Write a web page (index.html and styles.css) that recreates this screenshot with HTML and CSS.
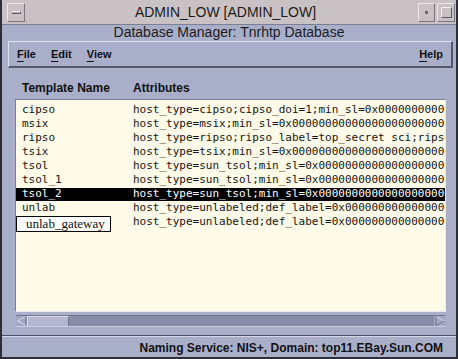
FILE: index.html
```html
<!DOCTYPE html>
<html>
<head>
<meta charset="utf-8">
<link rel="stylesheet" href="styles.css">
</head>
<body>
<div class="window">
  <div class="titlebar">
    <div class="tbtn menu-btn"><span class="dash"></span></div>
    <div class="title">ADMIN_LOW [ADMIN_LOW]</div>
    <div class="tbtn min-btn"><span class="dot"></span></div>
    <div class="tbtn max-btn"><span class="sq"></span></div>
  </div>
  <div class="subtitle">Database Manager: Tnrhtp Database</div>
  <div class="menubar">
    <span class="mi"><u>F</u>ile</span>
    <span class="mi"><u>E</u>dit</span>
    <span class="mi"><u>V</u>iew</span>
    <span class="spacer"></span>
    <span class="mi"><u>H</u>elp</span>
  </div>
  <div class="headers">
    <span class="h-name">Template Name</span>
    <span class="h-attr">Attributes</span>
  </div>
  <div class="list">
    <div class="row"><span class="name">cipso</span><span class="attr">host_type=cipso;cipso_doi=1;min_sl=0x000000000000000000000000000000</span></div>
    <div class="row"><span class="name">msix</span><span class="attr">host_type=msix;min_sl=0x0000000000000000000000000000000000</span></div>
    <div class="row"><span class="name">ripso</span><span class="attr">host_type=ripso;ripso_label=top_secret sci;ripso_error=none</span></div>
    <div class="row"><span class="name">tsix</span><span class="attr">host_type=tsix;min_sl=0x0000000000000000000000000000000000</span></div>
    <div class="row"><span class="name">tsol</span><span class="attr">host_type=sun_tsol;min_sl=0x00000000000000000000000000000000</span></div>
    <div class="row"><span class="name">tsol_1</span><span class="attr">host_type=sun_tsol;min_sl=0x00000000000000000000000000000000</span></div>
    <div class="row selected"><span class="name">tsol_2</span><span class="attr">host_type=sun_tsol;min_sl=0x00000000000000000000000000000000</span></div>
    <div class="row"><span class="name">unlab</span><span class="attr">host_type=unlabeled;def_label=0x00000000000000000000000000000</span></div>
    <div class="row"><span class="name editing"><span class="edit">unlab_gateway</span></span><span class="attr">host_type=unlabeled;def_label=0x00000000000000000000000000000</span></div>
  </div>
  <div class="hscroll">
    <div class="arrow left"><svg width="10" height="10" viewBox="0 0 10 10"><path d="M9 0.5 L0.5 5 L9 9.5" fill="none" stroke="#d6d9e8" stroke-width="1"/><path d="M9 0.5 L9 9.5" stroke="#6e7288" stroke-width="1"/></svg></div>
    <div class="thumb"></div>
    <div class="trough"></div>
    <div class="arrow right"><svg width="10" height="10" viewBox="0 0 10 10"><path d="M1 0.5 L9.5 5" fill="none" stroke="#d6d9e8" stroke-width="1"/><path d="M1 0.5 L1 9.5 L9.5 5" fill="none" stroke="#6e7288" stroke-width="1"/></svg></div>
  </div>
  <div class="status">Naming Service: NIS+, Domain: top11.EBay.Sun.COM</div>
</div>
</body>
</html>
```

FILE: styles.css
```css
html, body {
  margin: 0;
  padding: 0;
  background: #a9aec9;
}
.window {
  width: 458px;
  height: 359px;
  box-sizing: border-box;
  border-left: 2px solid #2e2e38;
  border-right: 2px solid #2e2e38;
  border-bottom: 2px solid #2e2e38;
  background: #a9aec9;
  display: flex;
  flex-direction: column;
  font-family: "Liberation Sans", Arial, sans-serif;
  color: #111;
  overflow: hidden;
}
.titlebar {
  height: 24px;
  border-bottom: 1px solid #7c7f94;
  background: #c9c2c4;
  display: flex;
  align-items: center;
  padding: 0 1px 0 5px;
  border-top: 1px solid #3a3a44;
  box-sizing: content-box;
  margin-top: -1px;
}
.tbtn {
  height: 19px;
  box-sizing: border-box;
  border-top: 1px solid #ece6e8;
  border-left: 1px solid #ece6e8;
  border-right: 1px solid #7c767c;
  border-bottom: 1px solid #7c767c;
  display: flex;
  align-items: center;
  justify-content: center;
}
.menu-btn { width: 18px; }
.min-btn { width: 17px; margin-right: 2px; }
.max-btn { width: 18px; }
.dash {
  width: 9px;
  height: 3px;
  box-sizing: border-box;
  background: #b8b2b6;
  border-top: 1px solid #f4eff0;
  border-bottom: 1px solid #5f5a60;
  border-right: 1px solid #5f5a60;
}
.dot {
  width: 3px;
  height: 3px;
  background: #6e686e;
}
.sq {
  width: 11px;
  height: 11px;
  box-sizing: border-box;
  border-top: 1px solid #f4eff0;
  border-left: 1px solid #f4eff0;
  border-right: 1px solid #5f5a60;
  border-bottom: 1px solid #5f5a60;
}
.title {
  flex: 1;
  text-align: center;
  font-size: 14px;
  color: #1c1c1c;
  padding-left: 8px;
}
.subtitle {
  height: 15px;
  line-height: 15px;
  text-align: center;
  font-size: 14px;
  color: #1c1c1c;
}
.menubar {
  margin: 1px 3px 0 6px;
  height: 27px;
  box-sizing: border-box;
  border-top: 1px solid #dfe2f0;
  border-left: 1px solid #dfe2f0;
  border-right: 2px solid #555868;
  border-bottom: 2px solid #555868;
  display: flex;
  align-items: center;
  padding: 0 8px 1px 8px;
  font-size: 11px;
  font-weight: bold;
}
.mi {
  margin-right: 15px;
}
.mi:last-child { margin-right: 0; }
.mi u {
  text-underline-offset: 3px;
  text-decoration-thickness: 1px;
}
.spacer { flex: 1; }
.headers {
  margin-top: 11px;
  height: 20px;
  display: flex;
  font-size: 12px;
  font-weight: bold;
  line-height: 14px;
  padding-top: 2px;
  box-sizing: border-box;
}
.h-name { margin-left: 20px; width: 111px; }
.list {
  margin: 0 10px 0 13px;
  height: 213px;
  box-sizing: border-box;
  background: #fffbe8;
  border-top: 1px solid #7d8098;
  border-left: 1px solid #7d8098;
  border-right: 1px solid #e8eaf4;
  border-bottom: 1px solid #e8eaf4;
  padding-top: 4px;
  overflow: hidden;
  font-family: "DejaVu Sans Mono", "Liberation Mono", monospace;
  font-size: 11px;
  color: #141414;
}
.row {
  height: 14px;
  line-height: 12px;
  display: flex;
  align-items: flex-start;
  white-space: nowrap;
}
.row.selected {
  background: #000;
  height: 13px;
  margin-bottom: 1px;
  color: #fff;
}
.name {
  width: 117px;
  flex: none;
  padding-left: 6px;
  box-sizing: border-box;
}
.attr {
  overflow: hidden;
  height: 14px;
}
.name.editing {
  padding-left: 0;
  position: relative;
}
.edit {
  position: absolute;
  left: 0;
  top: 0;
  width: 95px;
  height: 16px;
  box-sizing: border-box;
  background: #fff;
  border: 1px solid #000;
  font-family: "Liberation Serif", "Times New Roman", serif;
  font-size: 13px;
  line-height: 14px;
  padding-left: 9px;
  color: #111;
}
.hscroll {
  margin: 3px 11px 0 14px;
  height: 12px;
  display: flex;
  background: #888da7;
  box-sizing: border-box;
  border-top: 1px solid #72768e;
  border-bottom: 1px solid #c9cce0;
}
.arrow {
  width: 11px;
  display: flex;
  align-items: center;
  justify-content: center;
  background: #a3a8c3;
}
.thumb {
  width: 42px;
  background: #b3b7cf;
  box-sizing: border-box;
  border-top: 1px solid #dcdfee;
  border-left: 1px solid #dcdfee;
  border-right: 1px solid #6f7389;
}
.trough { flex: 1; }
.status {
  margin-top: 8px;
  flex: 1;
  border-top: 1px solid #4d5062;
  box-shadow: inset 0 1px 0 #d4d7e8;
  text-align: right;
  padding-right: 13px;
  font-size: 12px;
  font-weight: bold;
  line-height: 14px;
  padding-top: 5px;
  box-sizing: border-box;
}
```
